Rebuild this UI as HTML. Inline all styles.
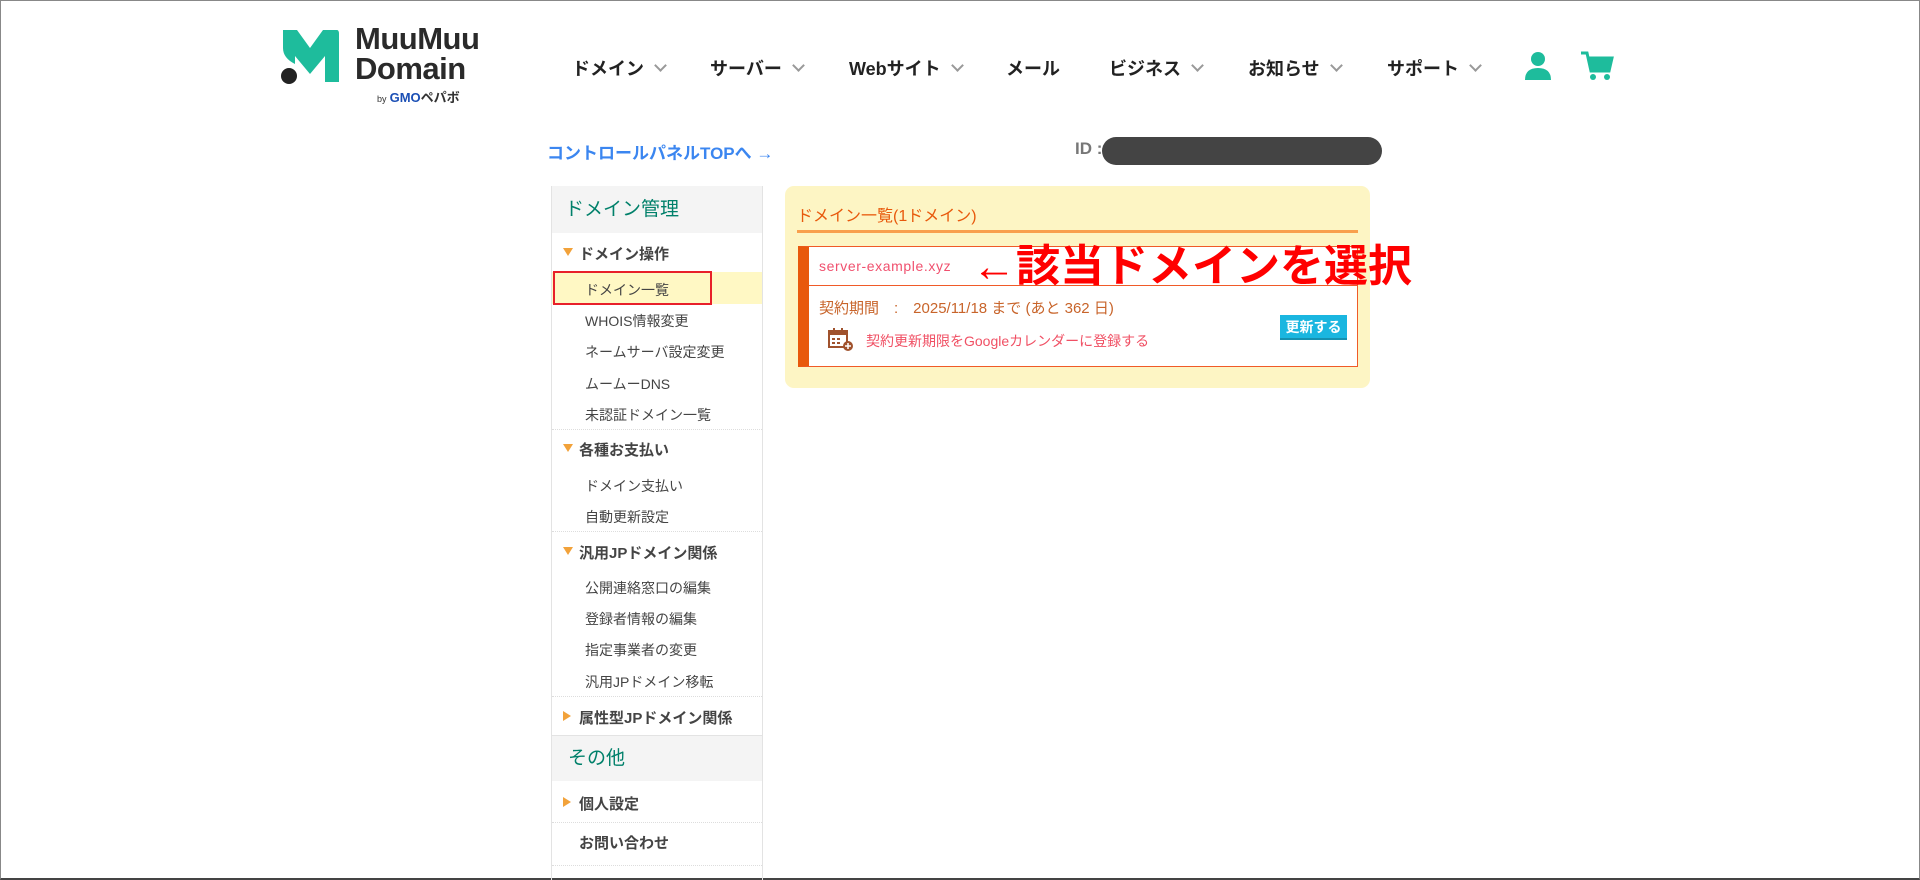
<!DOCTYPE html>
<html><head><meta charset="utf-8"><style>
*{margin:0;padding:0;box-sizing:border-box}
body{width:1920px;height:880px;position:relative;background:#fff;font-family:"Liberation Sans","Noto Sans CJK JP",sans-serif;overflow:hidden}
.frame{position:absolute;left:0;top:0;width:1920px;height:880px;border:1px solid #888;border-bottom:2px solid #444}
.a{position:absolute;white-space:nowrap}
.nav{font-size:18px;font-weight:bold;color:#222;top:55px}
.nav .c{display:inline-block;width:9px;height:9px;border-right:2px solid #999;border-bottom:2px solid #999;transform:rotate(45deg);margin-left:12px;position:relative;top:-5px}
.side{position:absolute;left:551px;top:186px;width:212px;height:694px;border-left:1px solid #e3e3e3;border-right:1px solid #e3e3e3}
.sh{position:absolute;left:0;width:210px;background:#f4f4f4;color:#00806a;font-size:19px;padding-left:13px}
.it{position:absolute;left:33px;font-size:14px;color:#444}
.bh{position:absolute;left:27px;font-size:15px;font-weight:bold;color:#444}
.tri{position:absolute;left:11px;width:0;height:0}
.td{border-left:5px solid transparent;border-right:5px solid transparent;border-top:8px solid #f2a23a}
.tr{border-top:5px solid transparent;border-bottom:5px solid transparent;border-left:8px solid #f2a23a}
.sep{position:absolute;left:0;width:210px;border-top:1px dotted #ddd}
</style></head><body>
<div class="frame"></div>
<svg class="a" style="left:279px;top:28px" width="62" height="58" viewBox="0 0 62 58">
<path d="M4 2 L18 2 L31 20 L44 2 L58 2 Q60 2 60 6 L60 54 L46 54 L46 28 L31 46 L16 28 L16 36 Q4 30 4 20 Z" fill="#1ebc9c"/>
<circle cx="10" cy="48" r="8" fill="#222"/>
</svg>
<div class="a" style="left:355px;top:24px;font-size:31px;font-weight:bold;color:#2a2a2a;line-height:30px;letter-spacing:-0.5px">MuuMuu<br>Domain</div>
<div class="a" style="left:377px;top:87px;font-size:11px;color:#333"><span style="font-size:9px">by</span> <b style="color:#1b4fb5;font-size:13px">GMO</b><b style="font-size:13px">ペパボ</b></div>
<div class="a nav" style="left:572px">ドメイン<span class="c"></span></div>
<div class="a nav" style="left:710px">サーバー<span class="c"></span></div>
<div class="a nav" style="left:849px">Webサイト<span class="c"></span></div>
<div class="a nav" style="left:1006px">メール</div>
<div class="a nav" style="left:1109px">ビジネス<span class="c"></span></div>
<div class="a nav" style="left:1248px">お知らせ<span class="c"></span></div>
<div class="a nav" style="left:1387px">サポート<span class="c"></span></div>
<svg class="a" style="left:1524px;top:51px" width="28" height="30" viewBox="0 0 28 30"><circle cx="14" cy="8" r="7" fill="#1ebc9c"/><path d="M1 29 Q1 17 14 17 Q27 17 27 29 Z" fill="#1ebc9c"/></svg>
<svg class="a" style="left:1580px;top:50px" width="34" height="32" viewBox="0 0 34 32"><path d="M1 3 L7 3 L11 21 L29 21 L32 8 L9 8" fill="none" stroke="#1ebc9c" stroke-width="3"/><path d="M9 8 L32 8 L29 21 L11 21 Z" fill="#1ebc9c"/><circle cx="13" cy="27" r="3" fill="#1ebc9c"/><circle cx="27" cy="27" r="3" fill="#1ebc9c"/></svg>
<div class="a" style="left:547px;top:139px;font-size:17px;font-weight:bold;color:#3b86f0">コントロールパネルTOPへ →</div>
<div class="a" style="left:1075px;top:139px;font-size:17px;font-weight:bold;color:#777">ID :</div>
<div class="a" style="left:1102px;top:137px;width:280px;height:28px;border-radius:14px;background:#444"></div>
<div class="side">
<div class="sh" style="top:0;height:47px;line-height:47px">ドメイン管理</div>
<div class="tri td" style="top:62px"></div><div class="bh" style="top:57px">ドメイン操作</div>
<div style="position:absolute;left:0;top:86px;width:210px;height:32px;background:#fff8c4"></div>
<div style="position:absolute;left:1px;top:85px;width:159px;height:34px;border:2px solid #e8202a"></div>
<div class="it" style="top:94px">ドメイン一覧</div>
<div class="it" style="top:125px">WHOIS情報変更</div>
<div class="it" style="top:156px">ネームサーバ設定変更</div>
<div class="it" style="top:188px">ムームーDNS</div>
<div class="it" style="top:219px">未認証ドメイン一覧</div>
<div class="sep" style="top:243px"></div>
<div class="tri td" style="top:258px"></div><div class="bh" style="top:253px">各種お支払い</div>
<div class="it" style="top:290px">ドメイン支払い</div>
<div class="it" style="top:321px">自動更新設定</div>
<div class="sep" style="top:345px"></div>
<div class="tri td" style="top:361px"></div><div class="bh" style="top:356px">汎用JPドメイン関係</div>
<div class="it" style="top:392px">公開連絡窓口の編集</div>
<div class="it" style="top:423px">登録者情報の編集</div>
<div class="it" style="top:454px">指定事業者の変更</div>
<div class="it" style="top:486px">汎用JPドメイン移転</div>
<div class="sep" style="top:510px"></div>
<div class="tri tr" style="top:525px"></div><div class="bh" style="top:521px">属性型JPドメイン関係</div>
<div class="sh" style="top:549px;height:46px;line-height:46px;border-top:1px solid #e3e3e3;padding-left:16px">その他</div>
<div class="tri tr" style="top:611px"></div><div class="bh" style="top:607px">個人設定</div>
<div class="sep" style="top:636px"></div>
<div class="bh" style="top:646px;left:27px">お問い合わせ</div>
<div class="sep" style="top:679px"></div>
</div>
<div class="a" style="left:785px;top:186px;width:585px;height:202px;background:#fdf5c4;border-radius:9px"></div>
<div class="a" style="left:797px;top:202px;font-size:16px;color:#e8590c">ドメイン一覧(1ドメイン)</div>
<div class="a" style="left:797px;top:230px;width:561px;height:3px;background:#f9a04d"></div>
<div class="a" style="left:798px;top:246px;width:560px;height:121px;background:#fff;border:1px solid #f05a28;border-left:11px solid #e8590c"></div>
<div class="a" style="left:809px;top:285px;width:548px;border-top:1px solid #f05a28"></div>
<div class="a" style="left:819px;top:258px;font-size:14px;color:#f0506e;font-family:'Liberation Sans',sans-serif;letter-spacing:0.6px">server-example.xyz</div>
<div class="a" style="left:972px;top:242px;font-size:44px;font-weight:bold;color:#ff0000;line-height:50px">←該当ドメインを選択</div>
<div class="a" style="left:819px;top:297px;font-size:15px;color:#c8642a">契約期間　:　2025/11/18 まで (あと 362 日)</div>
<div class="a" style="left:1280px;top:315px;width:67px;height:25px;background:#1ab6e0;color:#fff;font-size:14px;font-weight:bold;text-align:center;line-height:24px;border-bottom:2px solid #1590b0">更新する</div>
<svg class="a" style="left:828px;top:328px" width="26" height="24" viewBox="0 0 26 24"><rect x="1" y="3" width="18" height="16" fill="none" stroke="#a0522d" stroke-width="2"/><rect x="1" y="3" width="18" height="4" fill="#a0522d"/><rect x="5" y="0" width="2" height="5" fill="#a0522d"/><rect x="13" y="0" width="2" height="5" fill="#a0522d"/><g fill="#a0522d"><rect x="4" y="10" width="3" height="2"/><rect x="9" y="10" width="3" height="2"/><rect x="4" y="14" width="3" height="2"/><rect x="9" y="14" width="3" height="2"/></g><circle cx="20" cy="18" r="5" fill="#a0522d"/><path d="M20 15v6M17 18h6" stroke="#fff" stroke-width="1.5"/></svg>
<div class="a" style="left:866px;top:331px;font-size:14px;color:#f05064">契約更新期限をGoogleカレンダーに登録する</div>
</body></html>
